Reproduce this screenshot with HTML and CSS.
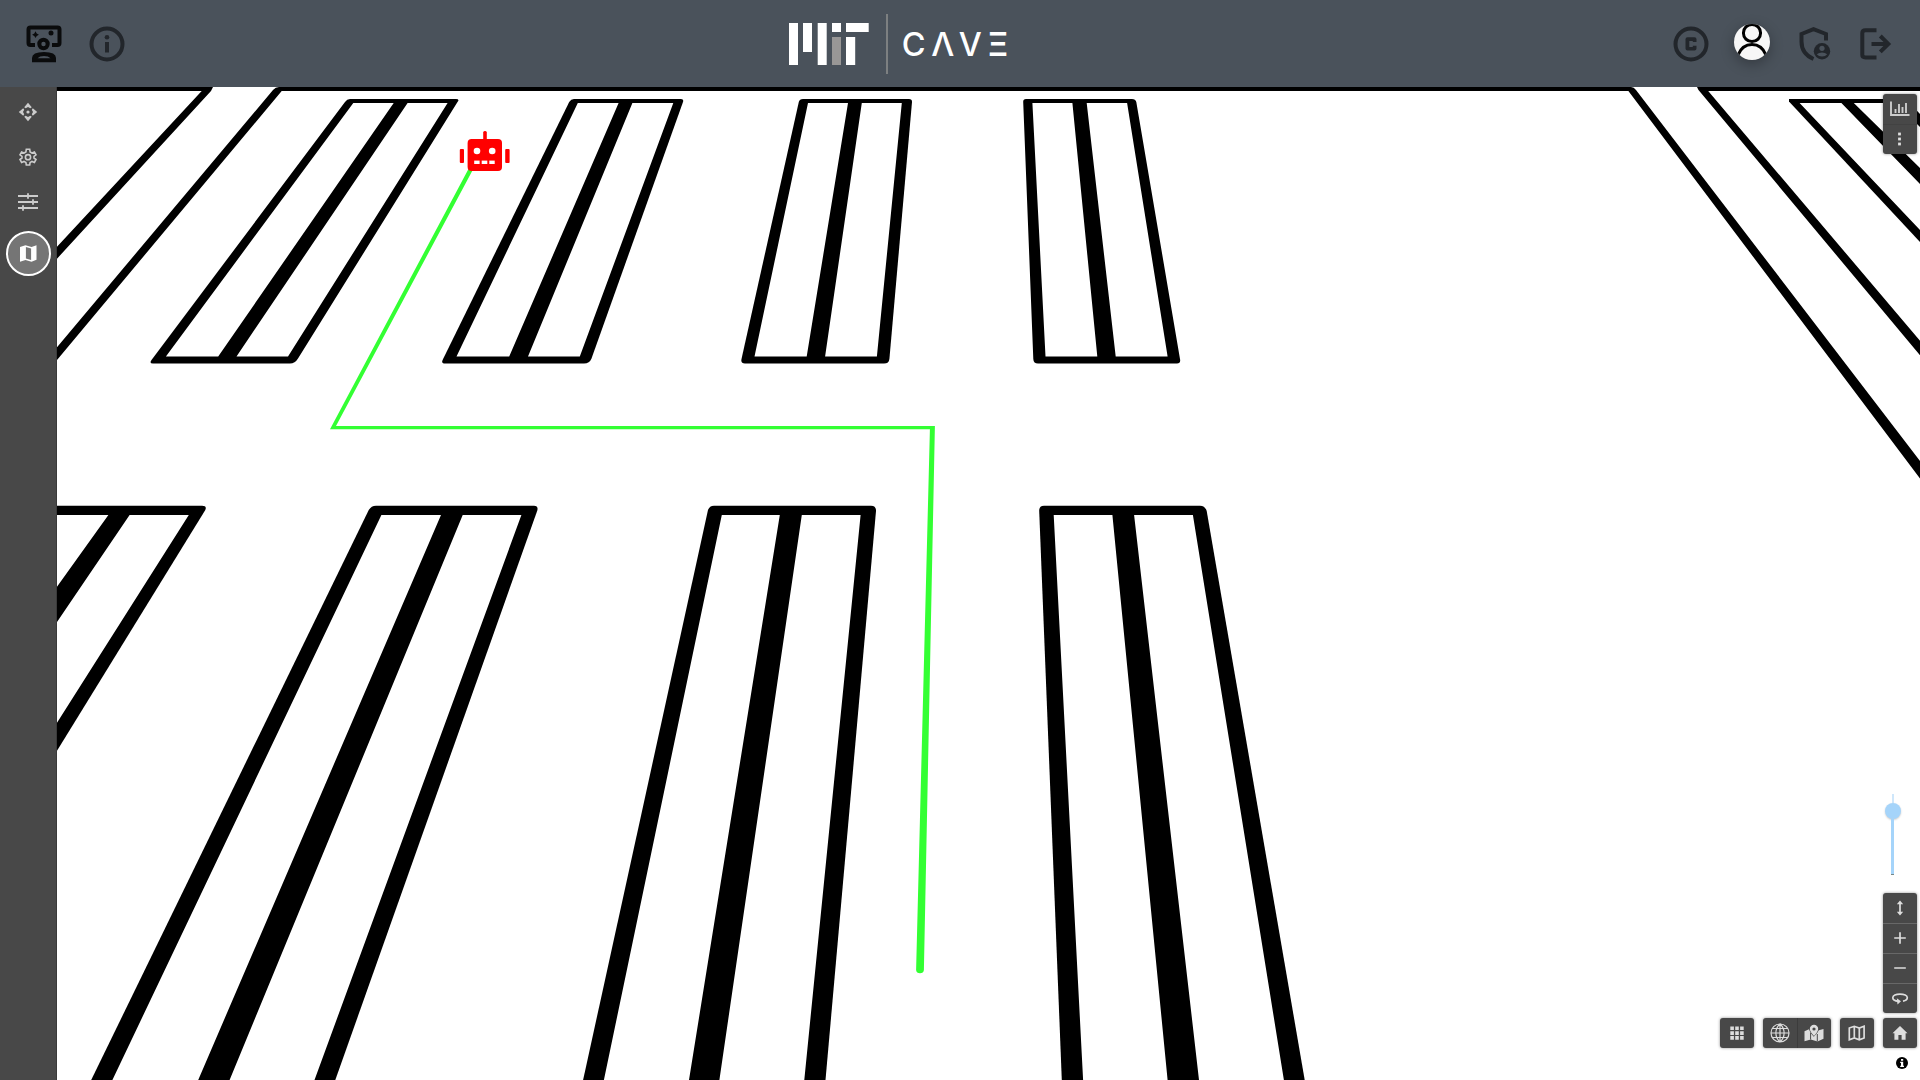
FILE: index.html
```html
<!DOCTYPE html>
<html lang="en">
<head>
<meta charset="utf-8">
<title>MIT CAVE</title>
<link rel="stylesheet" href="styles.css">
</head>
<body>
<header class="topbar">
  <div class="topbar-side">
    <svg class="icon-instructor" viewBox="0 0 36 38">
      <path class="line-black" d="M9 20H4.500Q2.500 20 2.500 18V4.500Q2.500 2.500 4.500 2.500H31.500Q33.500 2.500 33.500 4.500V18Q33.500 20 31.500 20H26"/>
      <circle cx="17.500" cy="19" r="4.200" class="line-black"/>
      <circle cx="25" cy="8" r="2.500"/>
      <path d="M9.500 6.300l1.200 2.200 2.200 1.200-2.200 1.200-1.200 2.200-1.200-2.200-2.200-1.200 2.200-1.200z"/>
      <path fill-rule="evenodd" d="M6 37.200V33Q6 27 18 27T30 33V37.200ZM11.500 33.200H24.500Q22.500 31 18 31T11.500 33.200Z"/>
    </svg>
    <svg class="icon-info" viewBox="0 0 36 36">
      <circle cx="18" cy="18" r="15.500" class="line-dark"/>
      <circle cx="18" cy="11.200" r="2.300"/>
      <rect x="16" y="16" width="4" height="10.500"/>
    </svg>
  </div>
  <svg class="logo" viewBox="0 0 222 62">
    <g class="logo-white">
      <rect x="1" y="10" width="9" height="42"/>
      <rect x="15" y="10" width="9" height="29"/>
      <rect x="29.700" y="10" width="9" height="42"/>
      <rect x="44" y="10" width="9" height="9"/>
      <rect x="58" y="10" width="22.700" height="9"/>
      <rect x="58" y="24" width="9.200" height="28"/>
    </g>
    <rect class="logo-grey" x="44" y="24" width="9" height="28"/>
    <rect class="logo-rule" x="98" y="1" width="2" height="60"/>
    <text class="logo-text" y="42.500"><tspan x="113.800">C</tspan><tspan x="143.300">Λ</tspan><tspan x="170.800">V</tspan></text>
    <text class="logo-text logo-bars" x="200" y="42.500" textLength="20" lengthAdjust="spacingAndGlyphs">Ξ</text>
  </svg>
  <div class="topbar-side topbar-right">
    <svg class="icon-copyright" viewBox="0 0 36 36">
      <circle cx="18" cy="18" r="15.500" class="line-dark"/>
      <path d="M14.500 11.200H21.500Q23.500 11.200 23.500 13.200V16H19.800V14.900H16.300V20.900H19.800V19.800H23.500V22.600Q23.500 24.600 21.500 24.600H14.500Q12.500 24.600 12.500 22.600V13.200Q12.500 11.200 14.500 11.200Z"/>
    </svg>
    <div class="avatar">
      <svg viewBox="0 0 36 36">
        <circle cx="18" cy="9" r="8.600"/>
        <path d="M4 31C7 23.500 12 20.500 18 20.500S29 23.500 32 31"/>
      </svg>
    </div>
    <svg class="icon-shield" viewBox="0 0 32 36">
      <path class="line-dark" d="M27 14.500V8L14.500 3.200 2.500 8V15.500C2.500 24 7.500 30 14.500 33"/>
      <circle cx="23" cy="25.300" r="8.200"/>
      <circle class="cut" cx="23" cy="22.300" r="2.600"/>
      <path class="cut" d="M17.800 28.300Q20 26.400 23 26.400T28.200 28.300Q26.400 30.600 23 30.600T17.800 28.300Z"/>
    </svg>
    <svg class="icon-exit" viewBox="0 0 32 32">
      <path class="line-dark" d="M16.500 2.200H5.500Q2.300 2.200 2.300 5V27Q2.300 29.400 5.500 29.400H16.500M11.500 15.900H28M20.300 8L28.300 15.900 20.300 23.800"/>
    </svg>
  </div>
</header>
<main class="workspace">
  <nav class="sidebar">
    <svg class="side-icon" viewBox="0 0 20 20">
      <path d="M10 .8L13.800 5.200 12.300 6.200 10 5 7.700 6.200 6.200 5.200ZM10 19.200L13.800 14.800 12.300 13.800 10 15 7.700 13.800 6.200 14.800ZM.8 10L5.200 6.200 6.200 7.700 5 10 6.200 12.300 5.200 13.800ZM19.200 10L14.800 6.200 13.800 7.700 15 10 13.800 12.300 14.800 13.800Z"/>
      <circle cx="10" cy="10" r="1.600"/>
    </svg>
    <svg class="side-icon" viewBox="0 0 20 20">
      <path class="side-line" d="M8.300 2.300h3.400l.4 2.600 1.900 1.100 2.400-1 1.600 2.900-2 1.500v1.600l2 1.500-1.600 2.900-2.400-1-1.900 1.100-.4 2.500H8.300l-.4-2.500L6 14.400l-2.400 1L2 12.500l2-1.500V9.400L2 7.900 3.600 5 6 6l1.900-1.100z"/>
      <circle class="side-line" cx="10" cy="10.200" r="2.600"/>
    </svg>
    <svg class="side-icon" viewBox="0 0 20 20">
      <path class="side-bars" d="M0 4H20M0 10H20M0 16H20"/>
      <path class="side-ticks" d="M10 1.300V6.700M15 7.300V12.700M5 13.300V18.700"/>
    </svg>
    <div class="side-active">
      <svg viewBox="0 0 17 17">
        <path fill-rule="evenodd" d="M0 2L5.500 .3 11.500 2 16.500 .3V14.700L11.500 16.700 5.500 15 0 16.700ZM5.900 2V13.500L11.100 15V3.500Z"/>
      </svg>
    </div>
  </nav>
  <section class="map">
    <svg class="floor" viewBox="57 87 1863 993">
      <g class="shelf">
        <path d="M57 87H213L211 91 57 258.700V246.700L201.700 91H57Z"/>
        <path d="M57 347.300L273 90Q275.500 87 279 87H1631Q1634 87 1636 90L1920 461V478.500L1628.400 91H281.700L57 360Z"/>
        <path d="M1697 87H1920V91H1708.200L1920 340.700V355.300L1698.500 90Z"/>
        <path d="M345 102Q347 99 350 99H456Q460 99 457.500 102L298 358.500Q295 363.500 290 363.500H153Q149 363.500 151.500 360Z"/>
        <path d="M569.200 102Q571 99 574 99H681Q684 99 683 102L591.500 358.500Q589.500 363.500 584 363.500H445Q441 363.500 442.600 360Z"/>
        <path d="M798.800 102Q799.500 99 803 99H909Q912.200 99 912 102L889.400 359Q889 363.500 884 363.500H745Q740.500 363.500 741.500 359Z"/>
        <path d="M1023.200 102Q1023 99 1026 99H1132Q1135.500 99 1136.300 102L1180 359Q1181 363.500 1177 363.500H1038Q1033.500 363.500 1033.300 359Z"/>
        <path d="M1789 99H1906L1920 114V242L1789 101.500Z"/>
        <path d="M57 505.700H202Q207.500 505.700 205 510.500L57 750.700Z"/>
        <path d="M368.500 510.500Q371 505.700 376 505.700H534Q538.500 505.700 537.300 510.500L335.300 1080H91.200Z"/>
        <path d="M708 510Q709.500 505.700 714 505.700H871Q876.200 505.700 876 511L825.500 1080H583.100Z"/>
        <path d="M1039.200 511Q1039 505.700 1044 505.700H1200Q1205 505.700 1206.700 511L1304.700 1080H1061.800Z"/>
      </g>
      <g class="aisle">
        <path d="M353.300 103H393.700L218.200 356.500H165.900ZM407.600 103H447.600L288 356.500H236.500Z"/>
        <path d="M577.800 103H618.600L509.200 356.500H456.500ZM632.400 103H673.300L579.800 356.500H528Z"/>
        <path d="M808 103H848L806.700 356.500H754.500ZM861.800 103H901.800L876.900 356.500H825.100Z"/>
        <path d="M1032.400 103H1072.400L1097.300 356.500H1045.500ZM1086.700 103H1127.100L1167.600 356.500H1115.700Z"/>
        <path d="M1799.600 103H1841.400L1920 184V230ZM1853.800 103H1896L1920 127V168Z"/>
        <path d="M57 515H108.400L57 586.700ZM129.600 515H188.800L57 722.700V622Z"/>
        <path d="M381.400 515H441L198.200 1080H112.400ZM462.700 515H521.400L314.500 1080H229.600Z"/>
        <path d="M721.800 515H779.800L689 1080H603.900ZM801.800 515H860.600L804.300 1080H719.400Z"/>
        <path d="M1053.700 515H1112.400L1167.600 1080H1083.100ZM1134.100 515H1192.900L1283.900 1080H1199Z"/>
      </g>
      <path class="route" d="M469 168H473.800L336 426H934.900L923.900 970Q923.500 973.300 920 973.300T916.100 970L929.900 429.200H330Z"/>
      <g class="robot">
        <rect x="483.200" y="131" width="3.600" height="10" rx="1.500"/>
        <rect x="459.800" y="149" width="4.200" height="14" rx="1"/>
        <rect x="505.200" y="149" width="4.400" height="14" rx="1"/>
        <rect x="467.600" y="139" width="34.400" height="32" rx="4"/>
      </g>
      <g class="aisle">
        <circle cx="477" cy="151" r="3.300"/>
        <circle cx="492.200" cy="151" r="3.300"/>
        <rect x="474.200" y="160.600" width="5.400" height="3.400"/>
        <rect x="481.700" y="160.600" width="5.600" height="3.400"/>
        <rect x="489.300" y="160.600" width="5.400" height="3.400"/>
      </g>
    </svg>

    <div class="tools tools-top">
      <button class="tool" aria-label="Statistics">
        <svg viewBox="0 0 20 20"><path class="ln2" d="M1 2.500V16H19.500"/><path class="ln2" d="M5.500 14V10M9 14V5M12.500 14V8M16 14V4"/></svg>
      </button>
      <button class="tool" aria-label="More">
        <svg viewBox="0 0 20 20"><rect x="8.100" y="3.600" width="2.800" height="2.800"/><rect x="8.100" y="8.600" width="2.800" height="2.800"/><rect x="8.100" y="13.600" width="2.800" height="2.800"/></svg>
      </button>
    </div>

    <div class="controls">
      <div class="slider"><i class="slider-rest"></i><i class="slider-thumb"></i><i class="slider-fill"></i></div>
      <div class="tools tools-nav">
        <button class="tool" aria-label="Tilt"><svg viewBox="0 0 20 20"><path class="ln" d="M10 4V16"/><path d="M10 2.500L13.200 6.300H6.800ZM10 17.500L13.200 13.700H6.800Z"/></svg></button>
        <button class="tool" aria-label="Zoom in"><svg viewBox="0 0 20 20"><path class="ln" d="M4.200 10H15.800M10 4.200V15.800"/></svg></button>
        <button class="tool" aria-label="Zoom out"><svg viewBox="0 0 20 20"><path class="ln" d="M4.200 10H15.800"/></svg></button>
        <button class="tool" aria-label="Rotate"><svg viewBox="0 0 20 20"><path class="ln" d="M8.500 13.300C4.800 13 2.800 11.500 2.800 9.800 2.800 7.600 6 6.100 10 6.100S17.300 7.600 17.300 9.800C17.300 11.300 15.600 12.700 13 13.200"/><path d="M6.800 10.300L11 13.300 7.500 16.600Z"/></svg></button>
      </div>
      <div class="tool-row">
        <div class="tools"><button class="tool" aria-label="Grid"><svg viewBox="0 0 20 20"><path d="M3.300 3.500h3.600v3.600H3.300zM8.200 3.500h3.600v3.600H8.200zM13.100 3.500h3.600v3.600h-3.600zM3.300 8.300h3.600v3.600H3.300zM8.200 8.300h3.600v3.600H8.200zM13.100 8.300h3.600v3.600h-3.600zM3.300 13.100h3.600v3.600H3.300zM8.200 13.100h3.600v3.600H8.200zM13.100 13.100h3.600v3.600h-3.600z"/></svg></button></div>
        <div class="tools tools-pair">
          <button class="tool" aria-label="Globe"><svg viewBox="0 0 20 20"><path class="thin" d="M10 1A9 9 0 0 0 10 19 9 9 0 0 0 10 1ZM10 1V19M1 10H19M2.500 5.500H17.500M2.500 14.500H17.500M10 1C4.500 6 4.500 14 10 19M10 1C15.500 6 15.500 14 10 19"/></svg></button>
          <button class="tool" aria-label="Places"><svg viewBox="0 0 20 20"><path d="M.5 8.300L5 6.300Q5.800 10 9.800 13.800 13.800 10 14.800 7.300L19.500 6V15.800L13.500 18.500 6.800 16.500 .5 18.300Z"/><path class="gap" d="M6.600 10V16.500M13.300 11V18.500"/><path fill-rule="evenodd" d="M10 1.800A4.200 4.200 0 0 1 14.200 6C14.200 8.500 11.500 11 10 13 8.500 11 5.800 8.500 5.800 6A4.200 4.200 0 0 1 10 1.800ZM10 4.400A1.600 1.600 0 1 0 10 7.600 1.600 1.600 0 1 0 10 4.400Z"/></svg></button>
        </div>
        <div class="tools"><button class="tool" aria-label="Map"><svg viewBox="0 0 20 20"><path class="ln" d="M2.300 5L7.300 3.300 12.300 5 17.100 3.300V15L12.300 16.800 7.300 15 2.300 16.800ZM7.300 3.300V15M12.300 5V16.800"/></svg></button></div>
        <div class="tools"><button class="tool" aria-label="Home"><svg viewBox="0 0 20 20"><path d="M10 3L17.500 10.200H15.600V16.700H11.600V12H8.400V16.700H4.400V10.200H2.500Z"/></svg></button></div>
      </div>
      <svg class="credit" viewBox="0 0 12 12"><circle cx="6" cy="6" r="6"/><path class="aisle" d="M5 2h2.200v1.700H5zM4.200 4.700h3v4h.8v1.200H4.200V8.700H5V5.900h-.8z"/></svg>
    </div>
  </section>
</main>
</body>
</html>
```

FILE: styles.css
```css
* { box-sizing: border-box; }
body {
  margin: 0;
  width: 1920px;
  height: 1080px;
  display: flex;
  flex-direction: column;
  overflow: hidden;
  background: #fff;
  font-family: Inter, "Liberation Sans", sans-serif;
}
svg { display: block; flex: none; }

.topbar {
  flex: none;
  height: 87px;
  display: grid;
  grid-template-columns: 762px 222px 1fr;
  align-items: center;
  padding: 0 28px 0 26px;
  background: #4a525b;
}
.topbar-side { display: flex; align-items: center; gap: 27px; fill: #22262b; }
.topbar-right { justify-content: flex-end; gap: 0; }
.line-dark { fill: none; stroke: #22262b; stroke-width: 4; }
.line-black { fill: none; stroke: #0a0b0c; stroke-width: 4; }
.icon-instructor { width: 36px; height: 38px; fill: #0a0b0c; }
.icon-info, .icon-copyright { width: 36px; height: 36px; }
.avatar {
  width: 36px;
  height: 36px;
  margin: 0 29px 3px 25px;
  border-radius: 50%;
  overflow: hidden;
  background: #f7f7f7;
  box-shadow: 0 4px 14px rgba(0, 0, 0, .3);
}
.avatar svg { width: 36px; height: 36px; fill: none; stroke: #000; stroke-width: 3; }
.icon-shield { width: 32px; height: 36px; margin-right: 29px; }
.icon-exit { width: 32px; height: 32px; }
.cut { fill: #4a525b; }
.logo { width: 222px; height: 62px; }
.logo-white { fill: #fff; }
.logo-grey { fill: #999796; }
.logo-rule { fill: #7d8081; }
.logo-text { font-size: 32.500px; font-weight: 500; fill: #fff; }
.logo-bars { font-weight: 600; }

.workspace { flex: 1; min-height: 0; display: flex; }
.sidebar {
  width: 57px;
  display: flex;
  flex-direction: column;
  align-items: center;
  gap: 25px;
  padding-top: 15px;
  background: #484848;
  border-right: 1px solid #3a3a3a;
}
.side-icon { width: 20px; height: 20px; fill: #ccc; }
.side-line { fill: none; stroke: #ccc; stroke-width: 1.600; }
.side-bars { stroke: #ccc; stroke-width: 2; }
.side-ticks { stroke: #ccc; stroke-width: 1.800; }
.side-active {
  width: 45px;
  height: 45px;
  margin-top: -6px;
  display: flex;
  align-items: center;
  justify-content: center;
  border: 2px solid #fff;
  border-radius: 50%;
  background: #757575;
}
.side-active svg { width: 17px; height: 17px; fill: #fff; }

.map { position: relative; flex: 1; background: #fff; overflow: hidden; }
.floor { width: 1863px; height: 993px; }
.shelf { fill: #000; }
.aisle { fill: #fff; }
.route { fill: #3f3; }
.robot { fill: #f00; }

.tools {
  display: flex;
  border-radius: 3px;
  overflow: hidden;
  background: #484848;
  box-shadow: 0 0 3px rgba(0, 0, 0, .45);
}
.tool {
  width: 34px;
  height: 30px;
  padding: 0;
  border: 0;
  display: flex;
  align-items: center;
  justify-content: center;
  background: none;
}
.tool svg { width: 20px; height: 20px; fill: #ddd; }
.tool .ln { fill: none; stroke: #ddd; stroke-width: 1.700; }
.tool .ln2 { fill: none; stroke: #ccc; stroke-width: 1.900; }
.tool .thin { fill: none; stroke: #ddd; stroke-width: 1.200; }
.tool .gap { fill: none; stroke: #484848; stroke-width: 1; }
.tools-top { position: absolute; top: 6.500px; right: 3px; flex-direction: column; }
.tools-top .tool + .tool { box-shadow: inset 0 1px #424242; }
.tools-nav { flex-direction: column; }
.tools-nav .tool + .tool { box-shadow: inset 0 1px #686868; }
.tools-pair .tool + .tool { box-shadow: inset 1px 0 #3c3c3c; }

.controls {
  position: absolute;
  right: 3px;
  bottom: 11.500px;
  display: flex;
  flex-direction: column;
  align-items: flex-end;
}
.slider {
  width: 16px;
  margin: 0 16.500px 18px 0;
  display: flex;
  flex-direction: column;
  align-items: center;
}
.slider-rest { width: 2px; height: 9px; background: #cfe7fb; }
.slider-thumb { width: 16px; height: 16px; border-radius: 50%; background: #a5d4fa; box-shadow: 0 1px 2px rgba(0, 0, 0, .2); }
.slider-fill { width: 3px; height: 56px; background: #a5d4fa; border-bottom: 1px solid #788; }
.tool-row { display: flex; gap: 9px; margin: 5px 0 8.500px; }
.credit { width: 12px; height: 12px; margin-right: 9px; fill: #000; }
```
